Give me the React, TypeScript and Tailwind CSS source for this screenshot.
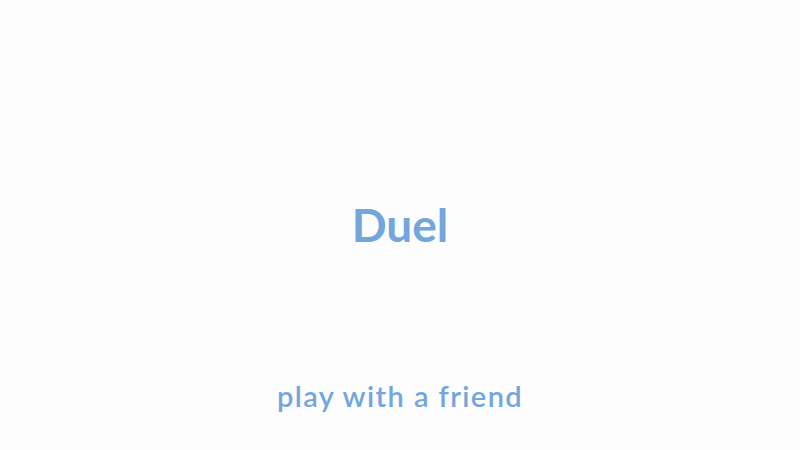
export default function App() {
  return (
    <div className="w-[800px] h-[450px] bg-[#fdfdfd] flex flex-col items-center overflow-hidden" style={{ fontFamily: '"Lato", "Noto Sans", sans-serif' }}>
      <div className="h-[197px] shrink-0" />
      <div className="text-[46px] leading-[56px] font-bold text-[#72a6dc]">Duel</div>
      <div className="h-[125px] shrink-0" />
      <div className="text-[29px] leading-[36px] font-semibold tracking-[1.4px] text-[#72a6dc]">play with a friend</div>
    </div>
  );
}
